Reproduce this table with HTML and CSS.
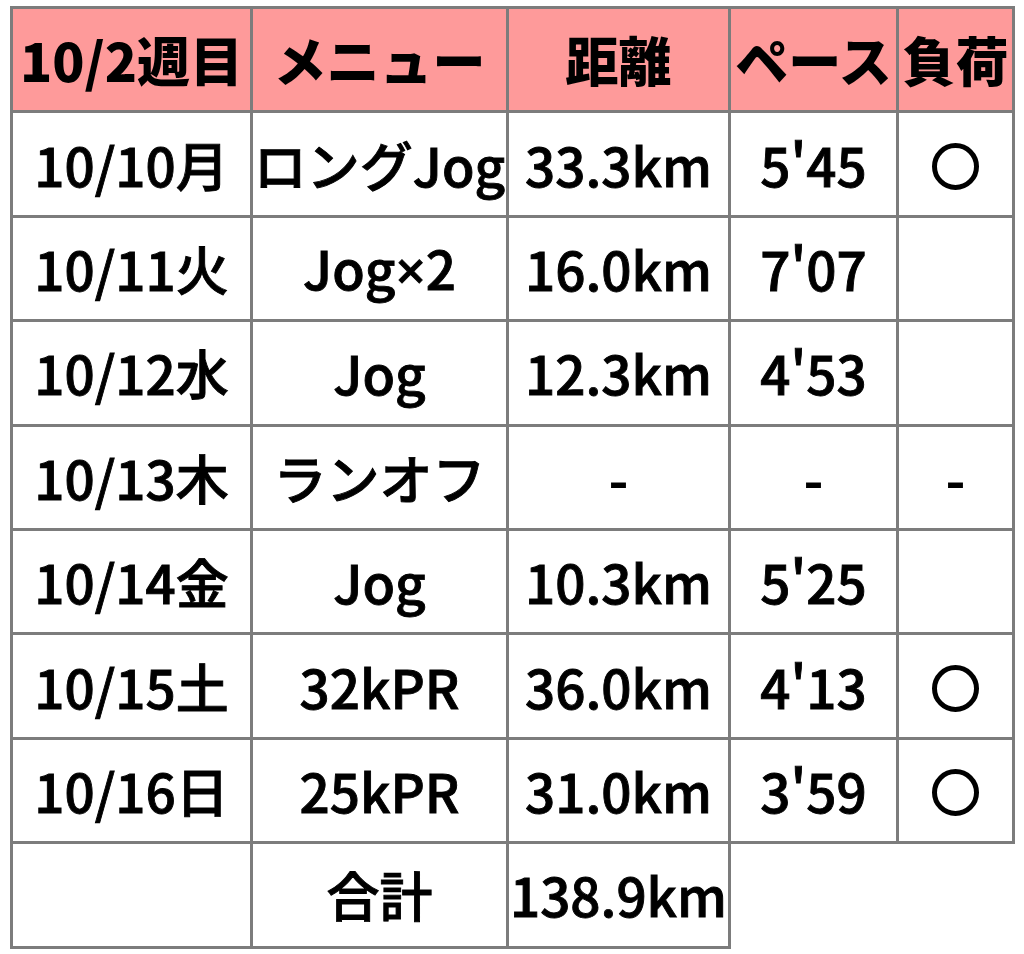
FILE: index.html
```html
<!DOCTYPE html>
<html lang="ja">
<head>
<meta charset="utf-8">
<link rel="stylesheet" href="styles.css">
</head>
<body>
<table class="log">
  <colgroup>
    <col class="c1"><col class="c2"><col class="c3"><col class="c4"><col class="c5">
  </colgroup>
  <thead>
    <tr class="head"><th>10/2週目</th><th>メニュー</th><th>距離</th><th>ペース</th><th>負荷</th></tr>
  </thead>
  <tbody>
    <tr><td>10/10月</td><td>ロングJog</td><td>33.3km</td><td>5'45</td><td><span class="ring" aria-label="○"></span></td></tr>
    <tr><td>10/11火</td><td>Jog<span class="times">×</span>2</td><td>16.0km</td><td>7'07</td><td></td></tr>
    <tr><td>10/12水</td><td>Jog</td><td>12.3km</td><td>4'53</td><td></td></tr>
    <tr><td>10/13木</td><td>ランオフ</td><td>-</td><td>-</td><td>-</td></tr>
    <tr><td>10/14金</td><td>Jog</td><td>10.3km</td><td>5'25</td><td></td></tr>
    <tr><td>10/15土</td><td>32kPR</td><td>36.0km</td><td>4'13</td><td><span class="ring" aria-label="○"></span></td></tr>
    <tr><td>10/16日</td><td>25kPR</td><td>31.0km</td><td>3'59</td><td><span class="ring" aria-label="○"></span></td></tr>
    <tr><td></td><td>合計</td><td>138.9km</td></tr>
  </tbody>
</table>
</body>
</html>
```

FILE: styles.css
```css
html, body {
  margin: 0;
  padding: 0;
  background: #ffffff;
}

body {
  padding: 6px 0 0 10px;
  font-family: "Noto Sans CJK JP", "Noto Sans", sans-serif;
  color: #000;
}

.log {
  border-collapse: collapse;
  table-layout: fixed;
  width: 1002px;
  font-size: 53px;
  line-height: 1;
}

.c1 { width: 240px; }
.c2 { width: 256px; }
.c3 { width: 222px; }
.c4 { width: 168px; }
.c5 { width: 116px; }

.log th,
.log td {
  border: 3px solid #7c7c7c;
  height: 104.4px;
  padding: 0;
  text-align: center;
  vertical-align: middle;
  white-space: nowrap;
  overflow: visible;
  box-sizing: border-box;
}

.log th {
  background: #fe9a9a;
  font-weight: 900;
}

.log td {
  font-weight: 500;
  -webkit-text-stroke: 0.9px #000;
}

.times {
  font-family: "Noto Sans", sans-serif;
  font-weight: 500;
}

.ring {
  display: inline-block;
  width: 37px;
  height: 37px;
  border: 5px solid #000;
  border-radius: 50%;
  vertical-align: middle;
  position: relative;
  top: -3px;
}
```
